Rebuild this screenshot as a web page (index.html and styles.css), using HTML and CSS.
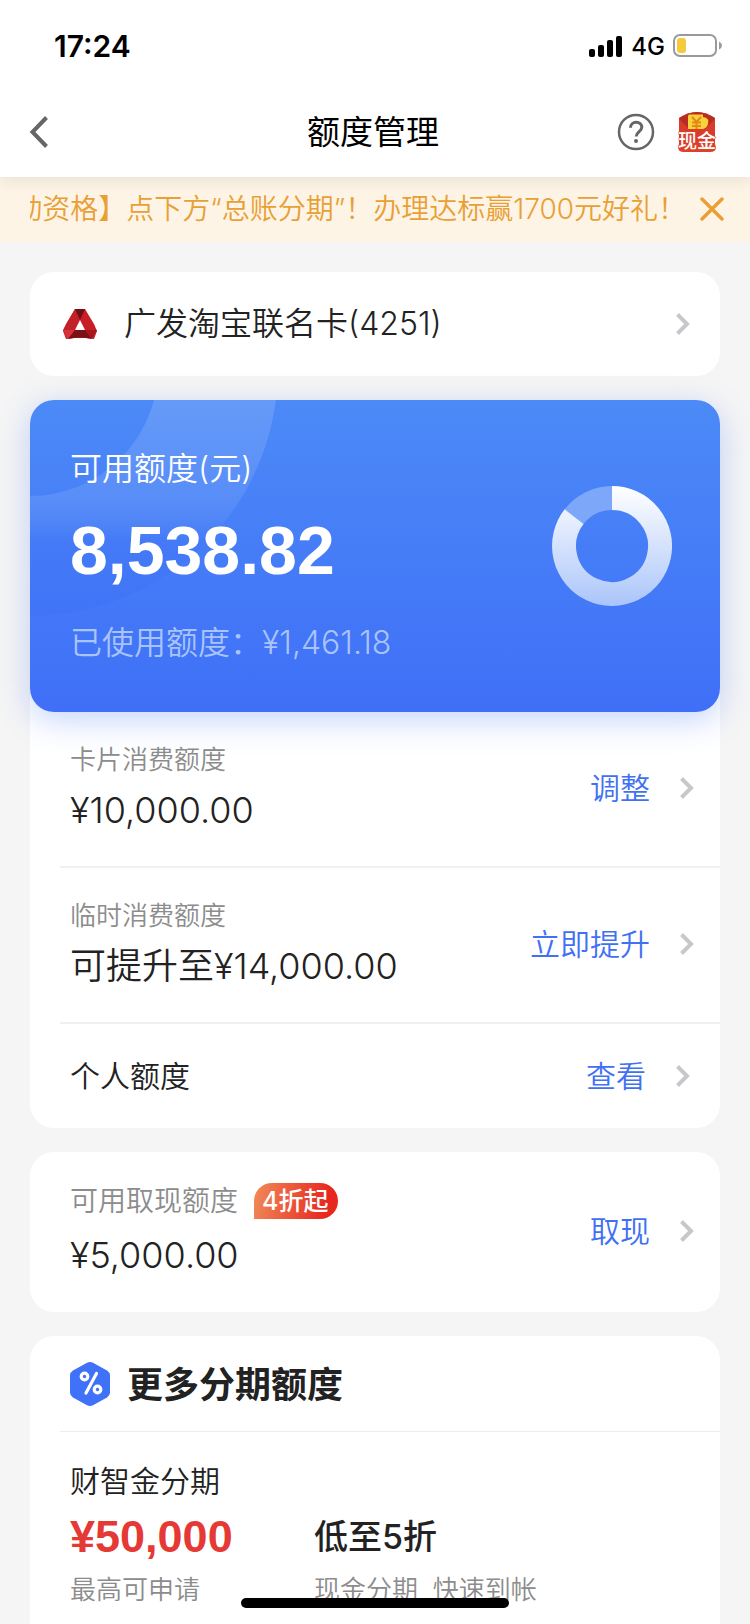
FILE: index.html
```html
<!DOCTYPE html>
<html lang="zh-CN">
<head>
<meta charset="utf-8">
<meta name="viewport" content="width=device-width, initial-scale=1">
<title>额度管理</title>
<link rel="stylesheet" href="styles.css">
</head>
<body>
<svg class="defs" aria-hidden="true">
  <symbol id="chevron" viewBox="0 0 14 22"><path d="M1.500 1.500 11 11 1.500 20.500" fill="none" stroke="#c7c7cc" stroke-width="4"/></symbol>
</svg>
<header class="top">
  <div class="status">
    <span class="time">17:24</span>
    <div class="signals">
      <svg width="34" height="22" viewBox="0 0 34 22" aria-hidden="true">
        <rect x="0" y="14" width="6" height="8" rx="2"/><rect x="9" y="10" width="6" height="12" rx="2"/><rect x="18" y="5" width="6" height="17" rx="2"/><rect x="27" y="1" width="6" height="21" rx="2"/>
      </svg>
      <span class="network">4G</span>
      <svg width="50" height="24" viewBox="0 0 50 24" aria-hidden="true">
        <rect x="1" y="1" width="42" height="21" rx="6" fill="none" stroke="#9a9a9d" stroke-width="2"/>
        <rect x="4" y="4" width="9" height="15" rx="3" fill="#f5cb3c"/>
        <path d="M46 7.500Q49 9 49 11.500T46 15.500Z" fill="#9a9a9d"/>
      </svg>
    </div>
  </div>
  <nav class="nav">
    <button class="icon-btn" type="button" aria-label="返回">
      <svg width="20" height="32" viewBox="0 0 20 32"><path d="M17.500 1.500 3.500 16l14 14.500" fill="none" stroke="#666" stroke-width="4"/></svg>
    </button>
    <h1 class="title">额度管理</h1>
    <div class="nav-tools">
      <button class="icon-btn" type="button" aria-label="帮助">
        <svg width="38" height="38" viewBox="0 0 38 38" fill="none" stroke="#666">
          <circle cx="19" cy="19" r="17" stroke-width="2.500"/>
          <path d="M13.500 14.800C13.500 11.300 16 9.300 19.200 9.300s5.600 2 5.600 5c0 4.200-5.600 4.400-5.600 9.200" stroke-width="3"/>
          <circle cx="19" cy="28" r="2" fill="#666" stroke="none"/>
        </svg>
      </button>
      <button class="icon-btn" type="button" aria-label="现金">
        <svg width="40" height="42" viewBox="0 0 40 42">
          <path d="M2 7Q20-5 38 7V33Q41 41 33 41H7Q-1 41 2 33Z" fill="#dc4129"/>
          <path d="M2 7Q20-5 38 7L33 18H7Z" fill="#b92d20"/>
          <path d="M2 8 12 18H28L38 8V33H2Z" fill="#d93c2b"/>
          <path d="M12 3.500H26V6Q33 7 31 13 30 17 26 18H11V5Z" fill="#fbd13b"/>
          <path d="m15 6 4.500 5L24 6M19.500 11v7M15 11.500h9M15 15h9" fill="none" stroke="#e08a18" stroke-width="2"/>
          <text class="cash-text" x="20" y="37" text-anchor="middle">现金</text>
        </svg>
      </button>
    </div>
  </nav>
</header>
<section class="notice">
  <p class="notice-text"><span>动资格】点下方“总账分期”！办理达标赢1700元好礼！</span></p>
  <button class="icon-btn" type="button" aria-label="关闭">
    <svg width="24" height="24" viewBox="0 0 24 24"><path d="M2 2 22 22M22 2 2 22" fill="none" stroke="#e8a035" stroke-width="3.500" stroke-linecap="round"/></svg>
  </button>
</section>
<main class="content">
  <a class="card account" href="#card">
    <svg width="36" height="32" viewBox="0 0 36 32" aria-hidden="true">
      <path d="M13 1h10l9 15 3 7-3 8-8-1H12l-8 1-3-8 3-7Z" fill="#c81f26"/>
      <path d="M13 1h10l-4 9-2 1ZM13 1 1 22h12l5-11Z" fill="#c32128"/>
      <path d="M13 1h10l-5 11Z" fill="#6d1015"/>
      <path d="M1 22h12l-7 9Z" fill="#d6333a"/>
      <path d="M13 22h10l7 9q-12-3-24 0Z" fill="#7c1015"/>
      <path d="M23 22h12l-5 9Z" fill="#a5171d"/>
      <path d="M18 12 23 22H13Z" fill="#fff"/>
    </svg>
    <span class="account-name">广发淘宝联名卡(4251)</span>
    <svg class="chev"><use href="#chevron"/></svg>
  </a>

  <section class="card limits">
    <div class="hero">
      <svg class="hero-deco" width="280" height="220" viewBox="0 0 280 220" aria-hidden="true">
        <defs><linearGradient id="band" gradientUnits="userSpaceOnUse" x1="0" y1="0" x2="0" y2="216">
          <stop offset="0" stop-color="#fff" stop-opacity=".14"/><stop offset=".4" stop-color="#fff" stop-opacity=".1"/><stop offset=".65" stop-color="#3b6cf6" stop-opacity=".2"/><stop offset="1" stop-color="#3b6cf6" stop-opacity=".3"/>
        </linearGradient></defs>
        <circle cx="0" cy="-32" r="188" fill="none" stroke="url(#band)" stroke-width="120"/>
      </svg>
      <div class="hero-info">
        <span class="hero-label">可用额度(元)</span>
        <strong class="hero-amount">8,538.82</strong>
        <span class="hero-used">已使用额度：¥1,461.18</span>
      </div>
      <svg class="ring" width="120" height="120" viewBox="0 0 120 120" fill="none" stroke-width="24" role="img" aria-label="可用额度占比">
        <defs><linearGradient id="ring" gradientUnits="userSpaceOnUse" x1="0" y1="0" x2="0" y2="120"><stop offset="0" stop-color="#fff"/><stop offset="1" stop-color="#abc5fa"/></linearGradient></defs>
        <path d="M22.100 30.600A48 48 0 0 1 60 12" stroke="#7da8f9"/>
        <path d="M60 12A48 48 0 1 1 22.100 30.600" stroke="url(#ring)"/>
      </svg>
    </div>
    <div class="row">
      <div class="info"><span class="label">卡片消费额度</span><span class="value">¥10,000.00</span></div>
      <a class="action" href="#adjust">调整<svg class="chev"><use href="#chevron"/></svg></a>
    </div>
    <div class="row">
      <div class="info"><span class="label">临时消费额度</span><span class="value">可提升至¥14,000.00</span></div>
      <a class="action" href="#raise">立即提升<svg class="chev"><use href="#chevron"/></svg></a>
    </div>
    <div class="row row-single">
      <span class="name">个人额度</span>
      <a class="action" href="#view">查看<svg class="chev"><use href="#chevron"/></svg></a>
    </div>
  </section>

  <section class="card">
    <div class="row row-cash">
      <div class="info"><span class="label label-cash">可用取现额度<em class="tag">4折起</em></span><span class="value">¥5,000.00</span></div>
      <a class="action" href="#cash">取现<svg class="chev"><use href="#chevron"/></svg></a>
    </div>
  </section>

  <section class="card more">
    <div class="more-head">
      <svg width="42" height="46" viewBox="0 0 42 46" aria-hidden="true">
        <path d="M18 1.800Q21 .2 24 1.800L38 9.500Q41 11.300 41 14.500V31.500Q41 34.700 38 36.500L24 44.200Q21 45.800 18 44.200L4 36.500Q1 34.700 1 31.500V14.500Q1 11.300 4 9.500Z" fill="#3f72f8"/>
        <g fill="none" stroke="#fff" stroke-width="3.200" stroke-linecap="round"><circle cx="15.500" cy="15.500" r="3.300"/><circle cx="28.500" cy="28.500" r="3.300"/><path d="M27.500 12.500 17 32"/></g>
      </svg>
      <h2 class="more-title">更多分期额度</h2>
    </div>
    <div class="offer">
      <h3 class="offer-name">财智金分期</h3>
      <strong class="offer-amount">¥50,000</strong>
      <strong class="offer-rate">低至5折</strong>
      <span class="offer-note">最高可申请</span>
      <span class="offer-note">现金分期&nbsp; 快速到帐</span>
    </div>
  </section>
</main>
<div class="home-bar"></div>
</body>
</html>
```
FILE: styles.css
```css
* { box-sizing: border-box; }
body {
  margin: 0;
  background: #f5f5f5;
  color: #222;
  font-family: Inter, "Noto Sans CJK SC", sans-serif;
  font-weight: 350;
  font-size: 30px;
}
h1, h2, h3, p { margin: 0; }
a { color: inherit; text-decoration: none; }
svg { display: block; flex: none; }
.defs { position: absolute; width: 0; height: 0; }
.icon-btn { padding: 0; border: 0; background: none; }

.top {
  position: relative;
  background: #fff;
  box-shadow: 0 4px 14px rgba(0, 0, 0, .08);
}
.status {
  display: flex;
  justify-content: space-between;
  align-items: center;
  height: 88px;
  padding: 4px 27px 0 54px;
  color: #000;
}
.time { font-size: 30px; font-weight: 600; }
.signals { display: flex; align-items: center; gap: 8px; }
.network { font-size: 24px; font-weight: 500; }
.nav {
  display: grid;
  grid-template-columns: 1fr auto 1fr;
  align-items: center;
  height: 89px;
  padding: 0 33px 2px 29px;
}
.title { font-size: 33px; font-weight: 400; line-height: 48px; color: #000; }
.nav-tools { display: flex; align-items: center; justify-content: flex-end; gap: 22px; }
.cash-text {
  font: 500 19px "Noto Sans CJK SC", sans-serif;
  fill: #fff;
  stroke: #dc4129;
  stroke-width: 1px;
  paint-order: stroke;
}

.notice {
  display: flex;
  align-items: center;
  gap: 14px;
  height: 65px;
  padding: 0 26px 2px 30px;
  background: #fdf4e6;
  color: #e8a035;
}
.notice-text {
  flex: 1;
  display: flex;
  justify-content: flex-end;
  overflow: hidden;
  white-space: nowrap;
  font-size: 28px;
  line-height: 40px;
}

.content { display: flex; flex-direction: column; gap: 24px; padding: 30px 30px 0; }
.card { background: #fff; border-radius: 24px; }
.chev { width: 14px; height: 22px; }

.account { display: flex; align-items: center; height: 104px; padding: 0 30px 0 32px; }
.account-name { flex: 1; margin-left: 26px; font-size: 32px; line-height: 48px; }

.hero {
  position: relative;
  display: flex;
  justify-content: space-between;
  padding: 45px 48px 45px 40px;
  border-radius: 24px;
  background: linear-gradient(#4c8af7, #3f6ff7);
  color: #fff;
  box-shadow: 0 8px 32px rgba(64, 112, 247, .3);
}
.hero-deco { position: absolute; top: 0; left: 0; border-radius: 24px 0 0; }
.hero-info { position: relative; display: flex; flex-direction: column; }
.hero-label { font-size: 32px; line-height: 48px; }
.hero-amount { margin: 12px 0 24px; font: 700 68px/90px "Liberation Sans", sans-serif; }
.hero-used { font-size: 32px; line-height: 48px; color: #a9c4fb; }
.ring { margin-top: 41px; }

.row {
  display: flex;
  justify-content: space-between;
  align-items: center;
  margin-left: 30px;
  padding: 28px 26px 30px 10px;
  border-bottom: 2px solid #f0f0f1;
}
.row:last-child { border-bottom: 0; }
.row-single { height: 104px; padding: 0 30px 0 10px; }
.row-cash { padding: 29px 26px 31px 10px; }
.info { display: flex; flex-direction: column; gap: 4px; }
.label { font-size: 26px; line-height: 40px; color: #8c8c8c; }
.value { font-size: 36px; line-height: 52px; }
.name { line-height: 44px; }
.action { display: flex; align-items: center; gap: 30px; line-height: 44px; color: #4070f4; }
.label-cash { display: flex; align-items: center; gap: 16px; margin-bottom: 4px; font-size: 28px; }
.tag {
  padding: 0 10px 0 8px;
  border-radius: 18px 18px 18px 0;
  background: linear-gradient(100deg, #f08a58, #e8281f 85%);
  color: #fff;
  font-size: 25px;
  font-style: normal;
  font-weight: 500;
  line-height: 36px;
}

.more { border-radius: 24px 24px 0 0; }
.more-head {
  display: flex;
  align-items: center;
  gap: 16px;
  height: 96px;
  margin-left: 30px;
  padding-left: 9px;
  border-bottom: 1px solid #ececec;
}
.more-title { padding-top: 2px; font-size: 36px; font-weight: 700; line-height: 52px; }
.offer {
  display: grid;
  grid-template-columns: 244px 1fr;
  align-items: center;
  padding: 26px 40px 14px;
}
.offer-name { grid-column: 1 / -1; font-size: 30px; font-weight: 350; line-height: 46px; }
.offer-amount { font: 700 45px/66px "Liberation Sans", sans-serif; color: #e53935; }
.offer-rate { font-size: 34px; font-weight: 500; line-height: 66px; }
.offer-note { font-size: 26px; line-height: 40px; color: #8c8c8c; }

.home-bar {
  position: fixed;
  left: 50%;
  bottom: 16px;
  width: 268px;
  height: 10px;
  margin-left: -134px;
  border-radius: 5px;
  background: #000;
}
```
